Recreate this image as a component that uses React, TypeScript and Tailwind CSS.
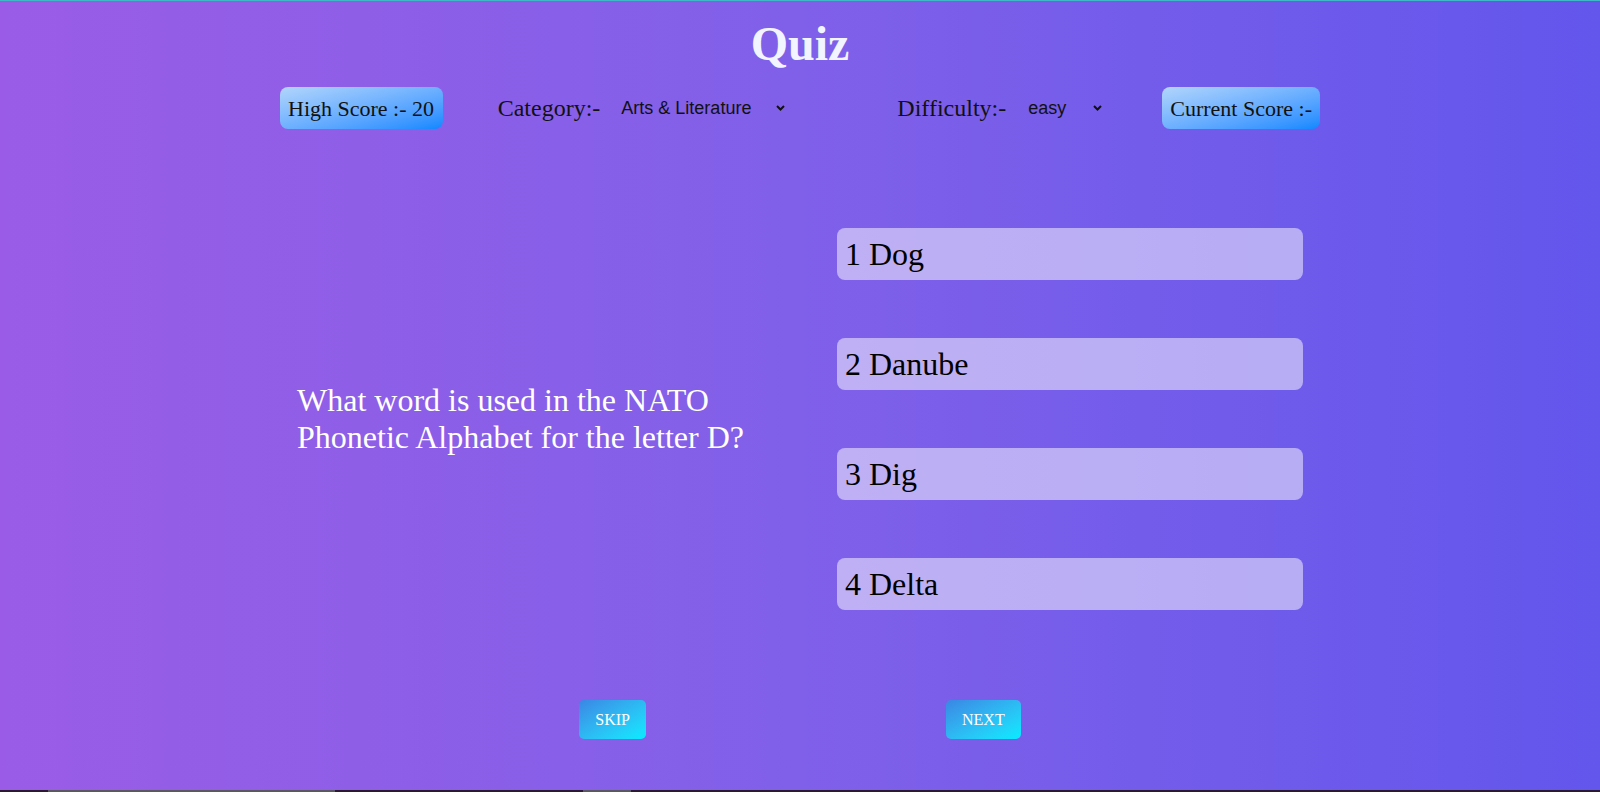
import { useState } from 'react';

const answers = ['Dog', 'Danube', 'Dig', 'Delta'];

function Chevron() {
  return (
    <svg width="9" height="6" viewBox="0 0 9 6" className="pointer-events-none">
      <polyline points="1,1 4.5,4.5 8,1" fill="none" stroke="#111" strokeWidth="2" />
    </svg>
  );
}

export default function App() {
  const [category, setCategory] = useState('arts');
  const [difficulty, setDifficulty] = useState('easy');

  return (
    <div className="h-[792px] flex flex-col overflow-hidden bg-linear-to-r from-[#9a5ce6] via-[#8060e9] to-[#6356ec] font-['Liberation_Serif',serif]">
      <div className="h-px bg-[#40b8c8]" />

      <div className="flex-1 flex flex-col">
        <h1 className="mt-4 text-center text-[48px] leading-[53px] font-bold text-[#f2f4ff]">Quiz</h1>

        {/* score + filters */}
        <div className="w-[1040px] mx-auto mt-[17px] h-[42px] flex items-center text-[#111]">
          <div className="w-[165px] h-[42px] flex items-center px-2 rounded-lg bg-linear-to-br from-[#b2d5fb] to-[#0688ff] text-[22px] whitespace-nowrap">
            High Score :- 20
          </div>

          <div className="ml-[55px] flex items-center">
            <label htmlFor="category" className="text-[24px]">Category:-</label>
            <select
              id="category"
              value={category}
              onChange={(e) => setCategory(e.target.value)}
              className="ml-[21px] w-[155px] appearance-none bg-transparent outline-none font-['Liberation_Sans',sans-serif] text-[18px] text-[#111]"
            >
              <option value="arts">Arts &amp; Literature</option>
              <option value="film">Film &amp; TV</option>
              <option value="food">Food &amp; Drink</option>
              <option value="general">General Knowledge</option>
              <option value="geography">Geography</option>
              <option value="history">History</option>
              <option value="music">Music</option>
              <option value="science">Science</option>
            </select>
            <Chevron />
          </div>

          <div className="ml-[112px] flex items-center">
            <label htmlFor="difficulty" className="text-[24px]">Difficulty:-</label>
            <select
              id="difficulty"
              value={difficulty}
              onChange={(e) => setDifficulty(e.target.value)}
              className="ml-[22px] w-[65px] appearance-none bg-transparent outline-none font-['Liberation_Sans',sans-serif] text-[18px] text-[#111]"
            >
              <option value="easy">easy</option>
              <option value="medium">medium</option>
              <option value="hard">hard</option>
            </select>
            <Chevron />
          </div>

          <div className="ml-[60px] w-[160px] h-[42px] flex items-center px-2 rounded-lg bg-linear-to-br from-[#b2d5fb] to-[#0688ff] text-[22px] whitespace-nowrap">
            Current Score :-
          </div>
        </div>

        {/* question + options */}
        <div className="w-[1006px] mx-auto mt-[99px] flex items-center justify-between">
          <p className="w-[480px] text-[32px] leading-[37px] text-white">
            What word is used in the NATO Phonetic Alphabet for the letter D?
          </p>
          <div className="w-[466px] flex flex-col gap-[58px]">
            {answers.map((a, i) => (
              <button
                key={a}
                className="h-[52px] flex items-center px-2 rounded-lg bg-white/50 text-[32px] text-black text-left cursor-pointer"
              >
                {i + 1} {a}
              </button>
            ))}
          </div>
        </div>

        <div className="mt-[90px] flex justify-center gap-[300px]">
          <button className="h-[39px] px-4 rounded-[5px] bg-linear-to-br from-[#3a86e4] to-[#00ecff] text-white text-[16px] uppercase">
            Skip
          </button>
          <button className="h-[39px] px-4 rounded-[5px] bg-linear-to-br from-[#3a86e4] to-[#00ecff] text-white text-[16px] uppercase">
            Next
          </button>
        </div>
      </div>

      <div className="h-[2px] flex bg-[#2a1b2f]">
        <div className="ml-[48px] w-[287px] bg-[#5a5a5e]" />
        <div className="ml-[248px] w-[48px] bg-[#5a5a5e]" />
      </div>
    </div>
  );
}
